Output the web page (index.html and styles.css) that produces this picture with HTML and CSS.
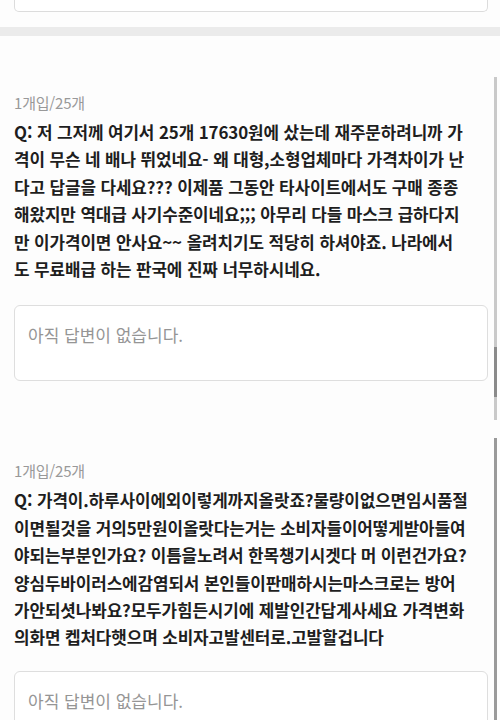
FILE: index.html
```html
<!DOCTYPE html>
<html lang="ko">
<head>
<meta charset="utf-8">
<link rel="stylesheet" href="styles.css">
</head>
<body>
<div class="page">
  <div class="prev-card"></div>
  <div class="divider"></div>

  <section class="qa">
    <div class="option">1개입/25개</div>
    <p class="question">Q: 저 그저께 여기서 25개 17630원에 샀는데 재주문하려니까 가<br>격이 무슨 네 배나 뛰었네요- 왜 대형,소형업체마다 가격차이가 난<br>다고 답글을 다세요??? 이제품 그동안 타사이트에서도 구매 종종<br>해왔지만 역대급 사기수준이네요;;; 아무리 다들 마스크 급하다지<br>만 이가격이면 안사요~~ 올려치기도 적당히 하셔야죠. 나라에서<br>도 무료배급 하는 판국에 진짜 너무하시네요.</p>
    <div class="answer">아직 답변이 없습니다.</div>
  </section>

  <section class="qa">
    <div class="option">1개입/25개</div>
    <p class="question">Q: 가격이.하루사이에외이렇게까지올랏죠?물량이없으면임시품절<br>이면될것을 거의5만원이올랏다는거는 소비자들이어떻게받아들여<br>야되는부분인가요? 이틈을노려서 한목챙기시겟다 머 이런건가요?<br>양심두바이러스에감염되서 본인들이판매하시는마스크로는 방어<br>가안되셧나봐요?모두가힘든시기에 제발인간답게사세요 가격변화<br>의화면 켑처다햇으며 소비자고발센터로.고발할겁니다</p>
    <div class="answer">아직 답변이 없습니다.</div>
  </section>

  <div class="scroll-track upper"><div class="scroll-thumb"></div></div>
  <div class="scroll-track lower"></div>
</div>
</body>
</html>
```

FILE: styles.css
```css
html, body {
  margin: 0;
  padding: 0;
  background: #fdfdfd;
}

.page {
  position: relative;
  width: 500px;
  height: 720px;
  overflow: hidden;
  font-family: "Noto Sans CJK KR", "Noto Sans", sans-serif;
  color: #1e1e1e;
}

.prev-card {
  height: 11px;
  margin: 0 12px 0 14px;
  border: 1px solid #dcdcdc;
  border-top: none;
  border-radius: 0 0 5px 5px;
  background: #fff;
}

.divider {
  height: 9px;
  margin-top: 15px;
  background: #ebebeb;
}

.qa {
  padding: 57px 12px 40px 14px;
}

.qa + .qa {
  padding-top: 40px;
}

.option {
  font-size: 15px;
  line-height: 20px;
  color: #999;
  letter-spacing: -0.2px;
}

.question {
  margin: 5px 0 0;
  font-size: 16.9px;
  line-height: 27.4px;
  font-weight: 700;
  white-space: nowrap;
  letter-spacing: -0.1px;
}

.answer {
  margin-top: 23px;
  padding: 18px 13px 35px;
  font-size: 17px;
  line-height: 21px;
  color: #959595;
  border: 1px solid #dedede;
  border-radius: 6px;
  background: #fff;
}

.qa + .qa .answer {
  margin-top: 20px;
}

.scroll-track {
  position: absolute;
  left: 494px;
  width: 3px;
  background: #c9c9c9;
}

.scroll-track.upper {
  top: 77px;
  height: 343px;
}

.scroll-track.lower {
  top: 438px;
  height: 282px;
  background: #9a9a9a;
}

.scroll-thumb {
  margin-top: 270px;
  height: 50px;
  background: #8a8a8a;
}
```
